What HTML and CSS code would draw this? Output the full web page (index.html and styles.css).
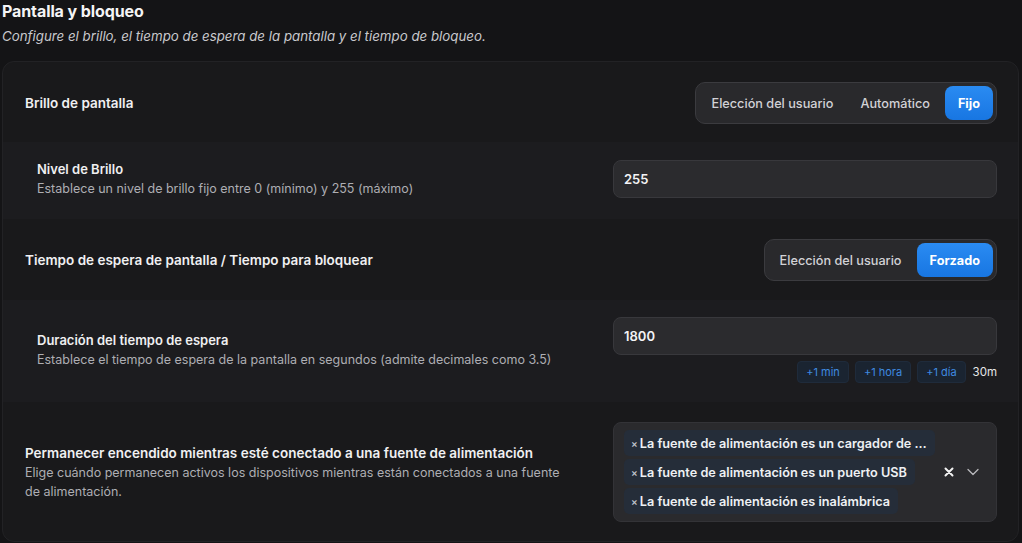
FILE: index.html
```html
<!DOCTYPE html>
<html lang="es">
<head>
<meta charset="utf-8">
<title>Pantalla y bloqueo</title>
<link rel="stylesheet" href="styles.css">
</head>
<body>
<div class="page">
  <header class="head">
    <h1 class="title">Pantalla y bloqueo</h1>
    <p class="subtitle">Configure el brillo, el tiempo de espera de la pantalla y el tiempo de bloqueo.</p>
  </header>

  <section class="card">
    <div class="row row-head row-bright">
      <div class="label">Brillo de pantalla</div>
      <div class="seg">
        <button class="seg-btn">Elección del usuario</button>
        <button class="seg-btn">Automático</button>
        <button class="seg-btn active">Fijo</button>
      </div>
    </div>

    <div class="row row-sub row-level">
      <div class="text">
        <div class="sub-label">Nivel de Brillo</div>
        <div class="desc">Establece un nivel de brillo fijo entre 0 (mínimo) y 255 (máximo)</div>
      </div>
      <div class="control">
        <div class="input">255</div>
      </div>
    </div>

    <div class="row row-head row-timeout">
      <div class="label">Tiempo de espera de pantalla / Tiempo para bloquear</div>
      <div class="seg">
        <button class="seg-btn">Elección del usuario</button>
        <button class="seg-btn active">Forzado</button>
      </div>
    </div>

    <div class="row row-sub row-duration">
      <div class="text">
        <div class="sub-label">Duración del tiempo de espera</div>
        <div class="desc">Establece el tiempo de espera de la pantalla en segundos (admite decimales como 3.5)</div>
      </div>
      <div class="control">
        <div class="input">1800</div>
        <div class="quick">
          <span class="qchip">+1 min</span>
          <span class="qchip">+1 hora</span>
          <span class="qchip">+1 día</span>
          <span class="qval">30m</span>
        </div>
      </div>
    </div>

    <div class="row row-power">
      <div class="text text-power">
        <div class="label">Permanecer encendido mientras esté conectado a una fuente de alimentación</div>
        <div class="desc desc-wrap">Elige cuándo permanecen activos los dispositivos mientras están conectados a una fuente de alimentación.</div>
      </div>
      <div class="control">
        <div class="multi">
          <div class="tags">
            <span class="tag"><span class="tx">×</span><span class="tag-text">La fuente de alimentación es un cargador de …</span></span>
            <span class="tag"><span class="tx">×</span><span class="tag-text">La fuente de alimentación es un puerto USB</span></span>
            <span class="tag"><span class="tx">×</span><span class="tag-text">La fuente de alimentación es inalámbrica</span></span>
          </div>
          <div class="multi-actions">
            <svg class="clear" width="10" height="10" viewBox="0 0 10 10"><path d="M1.5 1.5 L8.5 8.5 M8.5 1.5 L1.5 8.5" stroke="#f2f2f2" stroke-width="2" stroke-linecap="round"/></svg>
            <svg class="chev" width="12" height="8" viewBox="0 0 12 8"><path d="M1 1.5 L6 6.5 L11 1.5" fill="none" stroke="#b8b8bc" stroke-width="1.3" stroke-linecap="round" stroke-linejoin="round"/></svg>
          </div>
        </div>
      </div>
    </div>
  </section>
</div>
</body>
</html>
```

FILE: styles.css
```css
* { box-sizing: border-box; }
html, body {
  margin: 0;
  padding: 0;
  background: #141416;
}
body {
  font-family: Inter, "Noto Sans", "Liberation Sans", sans-serif;
  color: #ececee;
  width: 1022px;
  height: 543px;
  overflow: hidden;
}
.page {
  padding: 0 3px 0 2px;
}
.head {
  padding-top: 1px;
}
.title {
  margin: 0;
  font-size: 16px;
  font-weight: 700;
  line-height: 20px;
  color: #f4f4f5;
  letter-spacing: -0.1px;
}
.subtitle {
  margin: 5px 0 0;
  font-size: 13.3px;
  font-style: italic;
  line-height: 20px;
  color: #c9c9cd;
}
.card {
  margin-top: 15px;
  background: #19191b;
  border: 1px solid #222225;
  border-radius: 12px;
  overflow: hidden;
}
.row {
  display: flex;
  align-items: center;
  justify-content: space-between;
}
.row-head {
  padding: 20px 21px 18px 22px;
}
.row-timeout {
  padding-bottom: 19px;
}
.row-sub {
  background: #1c1c1f;
  padding-left: 34px;
  padding-right: 21px;
}
.row-level {
  padding-top: 18px;
  padding-bottom: 21px;
}
.row-duration {
  padding-top: 17px;
  padding-bottom: 19px;
}
.row-power {
  padding: 20px 21px 19px 22px;
}
.label {
  font-size: 13.5px;
  font-weight: 600;
  color: #f0f0f2;
  line-height: 18px;
}
.sub-label {
  font-size: 13px;
  font-weight: 600;
  color: #efeff1;
  line-height: 18px;
}
.desc {
  font-size: 12.5px;
  color: #aeaeb3;
  line-height: 19px;
  margin-top: 1px;
}
.desc-wrap {
  max-width: 542px;
}
.control {
  width: 384px;
  flex: none;
}
.seg {
  display: flex;
  align-items: center;
  gap: 0;
  height: 42px;
  padding: 3px;
  background: #29292c;
  border: 1px solid #3b3b3f;
  border-radius: 10px;
}
.seg-btn {
  font-family: inherit;
  font-size: 12.7px;
  font-weight: 500;
  color: #d2d2d6;
  background: transparent;
  border: 0;
  height: 34px;
  padding: 0 12px;
  border-radius: 8px;
  cursor: pointer;
}
.seg-btn + .seg-btn { margin-left: 3px; }
.seg-btn.active {
  background: linear-gradient(#2a8bf2, #1876e2);
  color: #ffffff;
  font-weight: 700;
  padding: 0 13px;
}
.input {
  height: 38px;
  background: #2b2b2e;
  border: 1px solid #38383c;
  border-radius: 8px;
  padding: 0 10px;
  display: flex;
  align-items: center;
  font-size: 13px;
  font-weight: 600;
  color: #f3f3f5;
}
.quick {
  display: flex;
  justify-content: flex-end;
  align-items: center;
  gap: 6px;
  margin-top: 6px;
}
.qchip {
  height: 22px;
  padding: 0 8px;
  display: inline-flex;
  align-items: center;
  font-size: 11px;
  color: #3f8ae0;
  background: #1a2431;
  border: 1px solid #1f2b3b;
  border-radius: 4px;
}
.qval {
  font-size: 11.5px;
  color: #e6e6e8;
  margin-left: 1px;
}
.multi {
  display: flex;
  align-items: center;
  min-height: 99px;
  background: #2a2a2d;
  border: 1px solid #333337;
  border-radius: 8px;
  padding: 7px 10px 7px 10px;
}
.tags {
  flex: 1;
  display: flex;
  flex-direction: column;
  align-items: flex-start;
  gap: 3px;
}
.tag {
  display: inline-flex;
  align-items: center;
  height: 26px;
  padding: 0 8px 0 7px;
  background: #252d39;
  border-radius: 5px;
  font-size: 12.7px;
  font-weight: 600;
  color: #eef0f3;
}
.tx {
  font-size: 10px;
  color: #c0c4ca;
  margin-right: 2px;
}
.multi-actions {
  display: flex;
  align-items: center;
  gap: 13px;
  padding-right: 7px;
}
```
